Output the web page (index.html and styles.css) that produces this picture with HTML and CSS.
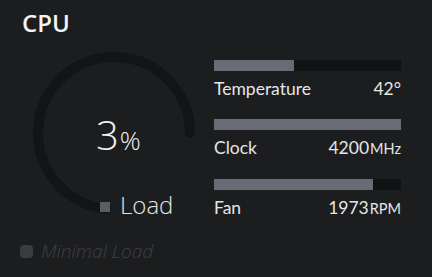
FILE: index.html
```html
<!DOCTYPE html>
<html>
<head>
<meta charset="utf-8">
<link rel="stylesheet" href="styles.css">
</head>
<body>
<div class="panel">
  <div class="left">
    <h1 class="title">CPU</h1>
    <div class="gauge">
      <svg class="gauge-svg" width="162" height="162" viewBox="33 52 162 162">
        <path d="M 190 133 A 76 76 0 1 0 106 208.6" fill="none" stroke="#131416" stroke-width="10" stroke-linecap="round"/>
      </svg>
      <div class="gauge-value"><span class="num">3</span><span class="pct">%</span></div>
      <div class="gauge-label"><span class="sq"></span><span class="load">Load</span></div>
    </div>
    <div class="minimal"><span class="msq"></span><span class="mtext">Minimal Load</span></div>
  </div>
  <div class="right">
    <div class="metric">
      <div class="bar"><div class="fill" style="width:43%"></div></div>
      <div class="row"><span class="name">Temperature</span><span class="val">42°</span></div>
    </div>
    <div class="metric">
      <div class="bar"><div class="fill" style="width:100%"></div></div>
      <div class="row"><span class="name">Clock</span><span class="val">4200<span class="unit">MHz</span></span></div>
    </div>
    <div class="metric">
      <div class="bar"><div class="fill" style="width:85%"></div></div>
      <div class="row"><span class="name">Fan</span><span class="val">1973<span class="unit">RPM</span></span></div>
    </div>
  </div>
</div>
</body>
</html>
```
FILE: styles.css
```css
html, body {
  margin: 0;
  padding: 0;
  background: #1c1d1f;
  width: 432px;
  height: 277px;
  overflow: hidden;
}
.panel {
  display: flex;
  font-family: "Open Sans", "Noto Sans", sans-serif;
  color: #ececec;
}
.left {
  width: 214px;
  display: flex;
  flex-direction: column;
}
.title {
  margin: 0;
  padding: 7px 0 0 22px;
  font-size: 24px;
  line-height: 32px;
  font-weight: 600;
  color: #f4f4f4;
}
.gauge {
  position: relative;
  margin: 13px 0 0 33px;
  width: 162px;
  height: 162px;
}
.gauge-svg {
  display: block;
}
.gauge-value {
  position: absolute;
  left: 63px;
  top: 59px;
  font-weight: 300;
  color: #f0f0f0;
  white-space: nowrap;
}
.num {
  font-size: 40px;
  line-height: 48px;
}
.pct {
  font-size: 26px;
  margin-left: 1px;
}
.gauge-label {
  position: absolute;
  left: 67px;
  top: 137px;
  display: flex;
  align-items: center;
}
.sq {
  width: 10px;
  height: 10px;
  background: #5d5d64;
  margin-top: 4px;
}
.load {
  font-size: 24px;
  font-weight: 300;
  line-height: 32px;
  margin-left: 10px;
  color: #e4e4e4;
}
.minimal {
  display: flex;
  align-items: center;
  margin: 25px 0 0 20px;
}
.msq {
  width: 13px;
  height: 13px;
  border-radius: 4px;
  background: #3b3c40;
}
.mtext {
  margin-left: 8px;
  font-size: 19px;
  font-style: italic;
  font-weight: 300;
  color: #3f4043;
  line-height: 24px;
}
.right {
  width: 187px;
  padding-top: 60px;
  display: flex;
  flex-direction: column;
  gap: 18px;
}
.bar {
  height: 11px;
  background: #111214;
  margin-bottom: 6px;
}
.fill {
  height: 100%;
  background: #6b6a77;
}
.row {
  display: flex;
  justify-content: space-between;
  align-items: baseline;
  font-family: "Lato", "Open Sans", sans-serif;
  font-size: 17.5px;
  line-height: 24px;
  color: #e6e6e6;
}
.val .unit {
  font-size: 14.5px;
  margin-left: 1px;
}
```
